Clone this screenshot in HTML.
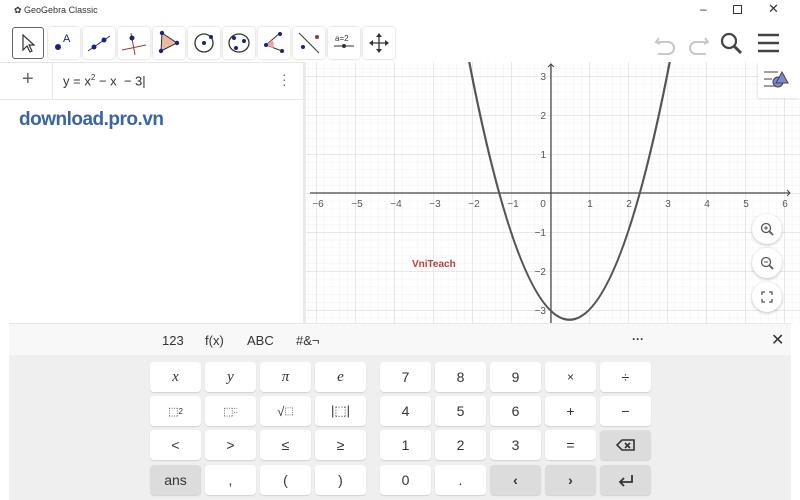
<!DOCTYPE html>
<html><head><meta charset="utf-8"><style>
*{margin:0;padding:0;box-sizing:border-box}
body{width:800px;height:500px;overflow:hidden;background:#fff;font-family:"Liberation Sans",sans-serif;position:relative;color:#333}
.abs{position:absolute}
.tb{position:absolute;top:27px;width:32px;height:32px;border-radius:3px;background:#fff;box-shadow:0 0 2px rgba(0,0,0,.25)}
.key{position:absolute;width:51px;height:30px;background:#fff;border-radius:4px;box-shadow:0 1px 1px rgba(0,0,0,.12);display:flex;align-items:center;justify-content:center;font-size:14px;color:#333}
.g{background:#dcdcdc}
.it{font-family:"Liberation Serif",serif;font-style:italic;font-size:15px}
.zb{position:absolute;left:752px;width:30px;height:30px;border-radius:50%;background:#fff;box-shadow:0 1px 3px rgba(0,0,0,.25)}
</style></head><body>
<div class="abs" style="left:14px;top:5px;font-size:9px;color:#333">✿ GeoGebra Classic</div>
<div class="abs" style="left:700px;top:2px;font-size:12px;color:#333">–</div>
<div class="abs" style="left:733px;top:5px;width:9px;height:9px;border:1px solid #333"></div>
<div class="abs" style="left:768px;top:1px;font-size:13px;color:#333">✕</div>
<div class="tb" style="left:12px;border:1.5px solid #666;box-shadow:none"><svg width="30" height="30"><path d="M10 7 L10 22 L14 18 L17 24 L19 23 L16 17 L21 17 Z" fill="none" stroke="#333" stroke-width="1.2"/></svg></div>
<div class="tb" style="left:48px"><svg width="32" height="32"><circle cx="10" cy="20" r="3" fill="#1a237e"/><text x="15" y="15" font-size="11" fill="#1a237e" font-family="Liberation Sans">A</text></svg></div>
<div class="tb" style="left:83px"><svg width="32" height="32"><path d="M5 24 L27 9" stroke="#333"/><circle cx="11" cy="20" r="2.5" fill="#1a237e"/><circle cx="21" cy="13" r="2.5" fill="#1a237e"/></svg></div>
<div class="tb" style="left:118px"><svg width="32" height="32"><path d="M4 23 L28 18 M13 6 L17 28" stroke="#8b3a3a"/><circle cx="14" cy="11" r="2.5" fill="#1a237e"/></svg></div>
<div class="tb" style="left:153px"><svg width="32" height="32"><path d="M9 6 L24 16 L8 24 Z" fill="#e8b8a0" stroke="#333"/><circle cx="9" cy="6" r="2.2" fill="#1a237e"/><circle cx="24" cy="16" r="2.2" fill="#1a237e"/><circle cx="8" cy="24" r="2.2" fill="#1a237e"/></svg></div>
<div class="tb" style="left:188px"><svg width="32" height="32"><circle cx="16" cy="16" r="9" fill="none" stroke="#333" stroke-width="1.3"/><circle cx="16" cy="16" r="2" fill="#1a237e"/><circle cx="23" cy="10" r="2" fill="#1a237e"/></svg></div>
<div class="tb" style="left:223px"><svg width="32" height="32"><ellipse cx="16" cy="16" rx="10" ry="9" fill="none" stroke="#333" stroke-width="1.3"/><circle cx="11" cy="11" r="2" fill="#1a237e"/><circle cx="13" cy="21" r="2" fill="#1a237e"/><circle cx="21" cy="14" r="2" fill="#1a237e"/></svg></div>
<div class="tb" style="left:258px"><svg width="32" height="32"><path d="M22 6 L8 18 L24 24" fill="none" stroke="#333"/><path d="M8 18 L14 13 A7 7 0 0 1 15 21 Z" fill="#f0a0a0"/><circle cx="22" cy="7" r="2" fill="#1a237e"/><circle cx="8" cy="18" r="2" fill="#1a237e"/><circle cx="24" cy="24" r="2" fill="#1a237e"/></svg></div>
<div class="tb" style="left:293px"><svg width="32" height="32"><path d="M6 6 L26 26" stroke="#333"/><circle cx="24" cy="10" r="2" fill="#8b3a3a"/><circle cx="10" cy="20" r="2" fill="#1a237e"/></svg></div>
<div class="tb" style="left:328px"><svg width="32" height="32"><text x="7" y="14" font-size="8" fill="#333" font-family="Liberation Sans">a=2</text><path d="M6 19 L26 19" stroke="#333"/><circle cx="16" cy="19" r="2" fill="#333"/></svg></div>
<div class="tb" style="left:363px"><svg width="32" height="32"><path d="M16 7 L16 25 M7 16 L25 16" stroke="#333" stroke-width="1.3"/><path d="M16 6 L13 10 L19 10Z M16 26 L13 22 L19 22Z M6 16 L10 13 L10 19Z M26 16 L22 13 L22 19Z" fill="#333"/></svg></div>
<svg class="abs" style="left:652px;top:30px" width="135" height="28"><path d="M7 8 L4 12 L8 14 M5 12 L16 12 A6 6 0 0 1 16 24 L6 24" fill="none" stroke="#c8c8c8" stroke-width="2"/><path d="M53 8 L56 12 L52 14 M55 12 L44 12 A6 6 0 0 0 44 24 L54 24" fill="none" stroke="#c8c8c8" stroke-width="2"/><circle cx="77" cy="11" r="7" fill="none" stroke="#444" stroke-width="2.2"/><path d="M82 16 L89 23" stroke="#444" stroke-width="3"/><path d="M106 5 H127 M106 13 H127 M106 21 H127" stroke="#444" stroke-width="2.4"/></svg>
<div class="abs" style="left:0;top:62px;width:305px;height:38px;border-top:1px solid #e6e6e6;border-bottom:1px solid #e6e6e6"></div>
<div class="abs" style="left:52px;top:62px;width:1px;height:38px;background:#e6e6e6"></div>
<div class="abs" style="left:22px;top:68px;font-size:20px;color:#666;font-weight:300">+</div>
<div class="abs" style="left:63px;top:73px;font-size:13px;color:#333">y = x<sup style="font-size:8px">2</sup> − x &nbsp;− 3|</div>
<div class="abs" style="left:282px;top:72px;font-size:14px;color:#666;line-height:5px">·<br>·<br>·</div>
<div class="abs" style="left:19px;top:109px;font-size:19px;font-weight:bold;color:#3a65a5;letter-spacing:-0.5px">download.pro.vn</div>
<div class="abs" style="left:303px;top:62px;width:3px;height:262px;background:#eaeaea"></div>
<svg class="abs" style="left:306px;top:62px" width="494" height="262" viewBox="306 62 494 262">
<defs>
<pattern id="mi" x="550" y="193" width="7.8" height="7.8" patternUnits="userSpaceOnUse"><path d="M0 0 V7.8 M0 0 H7.8" stroke="#f1f1f1" stroke-width="1" fill="none"/></pattern>
<pattern id="ma" x="550" y="193" width="39" height="39" patternUnits="userSpaceOnUse"><path d="M0 0 V39 M0 0 H39" stroke="#d2d2d2" stroke-width="1" fill="none"/></pattern>
</defs>
<rect x="306" y="62" width="494" height="262" fill="url(#mi)"/>
<rect x="306" y="62" width="494" height="262" fill="url(#ma)"/>
<path d="M310 193 H790 M551 324 V64" stroke="#444" stroke-width="1.2"/>
<path d="M787 190 L790 193 L787 196 M548 67 L551 64 L554 67" stroke="#444" fill="none"/>
<g font-size="10" fill="#555" font-family="Liberation Sans" text-anchor="middle">
<text x="318" y="207">−6</text><text x="357" y="207">−5</text><text x="396" y="207">−4</text><text x="435" y="207">−3</text><text x="474" y="207">−2</text><text x="513" y="207">−1</text><text x="543" y="207">0</text><text x="590" y="207">1</text><text x="629" y="207">2</text><text x="668" y="207">3</text><text x="707" y="207">4</text><text x="746" y="207">5</text><text x="785" y="207">6</text>
</g>
<g font-size="10" fill="#555" font-family="Liberation Sans" text-anchor="end">
<text x="546" y="80">3</text><text x="546" y="119">2</text><text x="546" y="158">1</text><text x="546" y="236">−1</text><text x="546" y="275">−2</text><text x="546" y="314">−3</text>
</g>
<path d="M468.1 56.1 Q569.5 583.4 670.9 56.1" fill="none" stroke="#555" stroke-width="2.2"/>
<text x="412" y="267" font-size="10" font-weight="bold" fill="#c0393b" font-family="Liberation Sans">VniTeach</text>
</svg>
<div class="abs" style="left:758px;top:62px;width:42px;height:36px;background:#fff;box-shadow:-1px 1px 2px rgba(0,0,0,.1)"><svg width="40" height="34"><path d="M6 10 H20 M6 17 H14 M6 24 H20" stroke="#666" stroke-width="1.3"/><circle cx="20" cy="20" r="5" fill="#7a8ad8" stroke="#444"/><path d="M18 21 L24 10 L30 21 Z" fill="#7a8ad8" stroke="#444"/></svg></div>
<div class="zb" style="top:214px"><svg width="30" height="30"><circle cx="14" cy="14" r="4.5" fill="none" stroke="#555" stroke-width="1.3"/><path d="M17.5 17.5 L21 21" stroke="#555" stroke-width="1.8"/><path d="M12 14 H16 M14 12 V16" stroke="#555"/></svg></div>
<div class="zb" style="top:248px"><svg width="30" height="30"><circle cx="14" cy="14" r="4.5" fill="none" stroke="#555" stroke-width="1.3"/><path d="M17.5 17.5 L21 21" stroke="#555" stroke-width="1.8"/><path d="M12 14 H16" stroke="#555"/></svg></div>
<div class="zb" style="top:282px"><svg width="30" height="30"><path d="M10 13 V10 H13 M17 10 H20 V13 M20 17 V20 H17 M13 20 H10 V17" fill="none" stroke="#555" stroke-width="1.3"/></svg></div>
<div class="abs" style="left:9px;top:323px;width:782px;height:32px;background:#f8f8f8;border-top:1px solid #e8e8e8"></div>
<div class="abs" style="left:9px;top:355px;width:782px;height:145px;background:#efefef"></div>
<div class="abs" style="left:162px;top:333px;font-size:13px">123</div>
<div class="abs" style="left:205px;top:333px;font-size:13px">f(x)</div>
<div class="abs" style="left:247px;top:333px;font-size:13px">ABC</div>
<div class="abs" style="left:296px;top:333px;font-size:13px">#&amp;¬</div>
<div class="abs" style="left:632px;top:332px;font-size:12px;font-weight:bold">···</div>
<div class="abs" style="left:771px;top:330px;font-size:16px">✕</div>

<div class="key it" style="left:150px;top:362px">x</div>
<div class="key it" style="left:205px;top:362px">y</div>
<div class="key it" style="left:260px;top:362px">π</div>
<div class="key it" style="left:315px;top:362px">e</div>
<div class="key" style="left:380px;top:362px">7</div>
<div class="key" style="left:435px;top:362px">8</div>
<div class="key" style="left:490px;top:362px">9</div>
<div class="key" style="left:545px;top:362px;font-size:12px">×</div>
<div class="key" style="left:600px;top:362px">÷</div>

<div class="key" style="left:150px;top:396px;font-size:11px">⬚<sup style="font-size:8px">2</sup></div>
<div class="key" style="left:205px;top:396px;font-size:11px">⬚<sup style="font-size:7px">⁚⁚</sup></div>
<div class="key" style="left:260px;top:396px;font-size:13px">√<span style="font-size:10px">⬚</span></div>
<div class="key" style="left:315px;top:396px;font-size:13px">|⬚|</div>
<div class="key" style="left:380px;top:396px">4</div>
<div class="key" style="left:435px;top:396px">5</div>
<div class="key" style="left:490px;top:396px">6</div>
<div class="key" style="left:545px;top:396px">+</div>
<div class="key" style="left:600px;top:396px">−</div>

<div class="key" style="left:150px;top:430px">&lt;</div>
<div class="key" style="left:205px;top:430px">&gt;</div>
<div class="key" style="left:260px;top:430px">≤</div>
<div class="key" style="left:315px;top:430px">≥</div>
<div class="key" style="left:380px;top:430px">1</div>
<div class="key" style="left:435px;top:430px">2</div>
<div class="key" style="left:490px;top:430px">3</div>
<div class="key" style="left:545px;top:430px">=</div>
<div class="key g" style="left:600px;top:430px"><svg width="20" height="14"><path d="M6 2 H18 V12 H6 L1 7 Z" fill="none" stroke="#333" stroke-width="1.6"/><path d="M9 5 L14 10 M14 5 L9 10" stroke="#333" stroke-width="1.6"/></svg></div>

<div class="key g" style="left:150px;top:465px">ans</div>
<div class="key" style="left:205px;top:465px">,</div>
<div class="key" style="left:260px;top:465px">(</div>
<div class="key" style="left:315px;top:465px">)</div>
<div class="key" style="left:380px;top:465px">0</div>
<div class="key" style="left:435px;top:465px">.</div>
<div class="key g" style="left:490px;top:465px;font-weight:bold">‹</div>
<div class="key g" style="left:545px;top:465px;font-weight:bold">›</div>
<div class="key g" style="left:600px;top:465px"><svg width="18" height="14"><path d="M15 2 V9 H3 M7 5 L3 9 L7 13" fill="none" stroke="#333" stroke-width="1.8"/></svg></div>
</body></html>
